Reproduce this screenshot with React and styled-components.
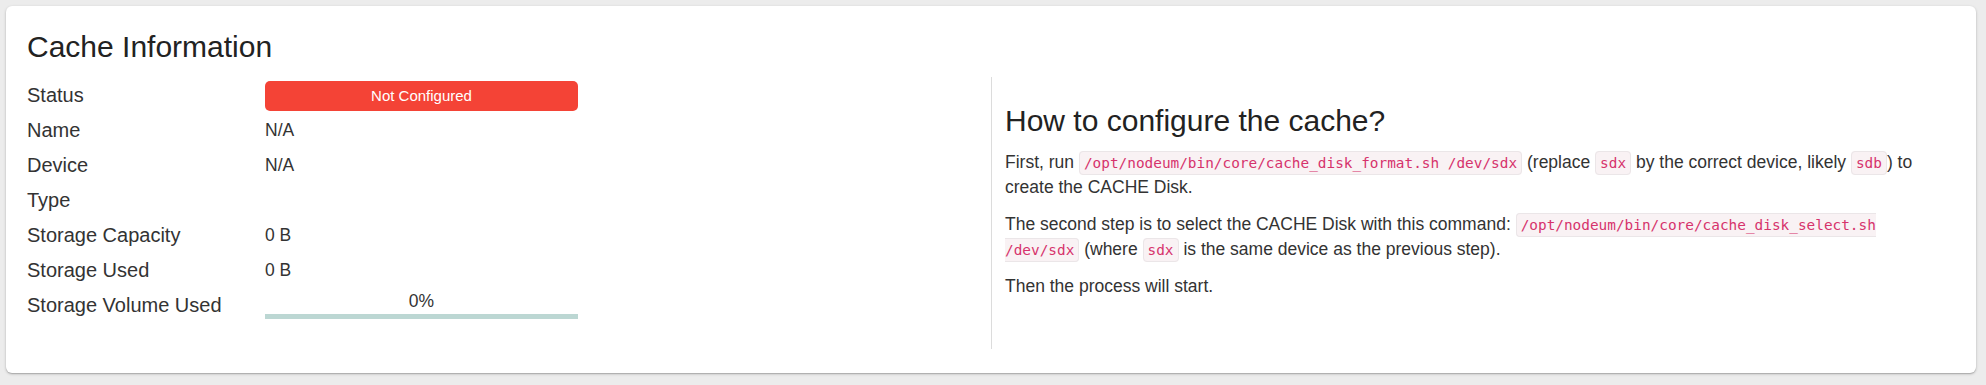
import React from "react";
import styled, { createGlobalStyle } from "styled-components";

const GlobalStyle = createGlobalStyle`
  html, body {
    margin: 0;
    background: #ececec;
    font-family: "Liberation Sans", Arial, sans-serif;
    color: #333;
  }
`;

const Page = styled.div`
  padding: 6px 10px 11px 6px;
`;

const Card = styled.div`
  background: #fff;
  border-radius: 6px;
  box-shadow: 0 1px 3px rgba(0, 0, 0, 0.22), 0 1px 1px rgba(0, 0, 0, 0.14);
  padding: 21px 21px 24px;
`;

const Title = styled.h2`
  margin: 0 0 10px;
  font-size: 30px;
  line-height: 40px;
  font-weight: 400;
  color: #222;
`;

const Columns = styled.div`
  display: grid;
  grid-template-columns: 1fr 1fr;
`;

const InfoTable = styled.div`
  display: grid;
  grid-template-columns: 238px 313px;
  grid-auto-rows: 35px;
  align-content: start;
  padding-top: 1px;
`;

const Label = styled.div`
  display: flex;
  align-items: center;
  font-size: 20px;
  color: #333;
`;

const Value = styled.div`
  display: flex;
  flex-direction: column;
  justify-content: center;
  font-size: 17.5px;
  color: #333;
`;

const Badge = styled.div`
  height: 30px;
  line-height: 30px;
  border-radius: 5px;
  background: #f44336;
  color: #fff;
  font-size: 15px;
  text-align: center;
`;

const Percent = styled.div`
  text-align: center;
  line-height: 18px;
  margin-bottom: 4px;
`;

const Bar = styled.div`
  height: 5px;
  background: #bcd7d3;
`;

const Fill = styled.div`
  height: 100%;
  background: #4caf9a;
`;

const Help = styled.div`
  border-left: 1px solid #dcdcdc;
  padding: 26px 13px 38px;
`;

const HelpTitle = styled.h3`
  margin: 0 0 11px;
  font-size: 30px;
  line-height: 36px;
  font-weight: 400;
  color: #222;
`;

const Para = styled.p`
  margin: 0 0 12px;
  font-size: 17.5px;
  line-height: 25px;
  color: #333;
`;

const Code = styled.code`
  font-family: "DejaVu Sans Mono", "Liberation Mono", monospace;
  font-size: 14.4px;
  line-height: 1;
  color: #d6336c;
  background: #f9f2f4;
  border: 1px solid #ebe6e8;
  border-radius: 4px;
  padding: 3px 4px;
`;

const rows = [
  { label: "Status", badge: "Not Configured" },
  { label: "Name", value: "N/A" },
  { label: "Device", value: "N/A" },
  { label: "Type", value: "" },
  { label: "Storage Capacity", value: "0 B" },
  { label: "Storage Used", value: "0 B" },
  { label: "Storage Volume Used", progress: 0 },
];

const App = () => {
  return (
    <>
      <GlobalStyle />
      <Page>
        <Card>
          <Title>Cache Information</Title>
          <Columns>
            <InfoTable>
              {rows.map((row) => (
                <React.Fragment key={row.label}>
                  <Label>{row.label}</Label>
                  <Value>
                    {row.badge && <Badge>{row.badge}</Badge>}
                    {row.value}
                    {row.progress !== undefined && (
                      <>
                        <Percent>{row.progress}%</Percent>
                        <Bar>
                          <Fill style={{ width: `${row.progress}%` }} />
                        </Bar>
                      </>
                    )}
                  </Value>
                </React.Fragment>
              ))}
            </InfoTable>
            <Help>
              <HelpTitle>How to configure the cache?</HelpTitle>
              <Para>
                First, run <Code>/opt/nodeum/bin/core/cache_disk_format.sh /dev/sdx</Code>{" "}
                (replace <Code>sdx</Code> by the correct device, likely <Code>sdb</Code>) to
                create the CACHE Disk.
              </Para>
              <Para>
                The second step is to select the CACHE Disk with this command:{" "}
                <Code>/opt/nodeum/bin/core/cache_disk_select.sh /dev/sdx</Code> (where{" "}
                <Code>sdx</Code> is the same device as the previous step).
              </Para>
              <Para>Then the process will start.</Para>
            </Help>
          </Columns>
        </Card>
      </Page>
    </>
  );
};

export default App;
